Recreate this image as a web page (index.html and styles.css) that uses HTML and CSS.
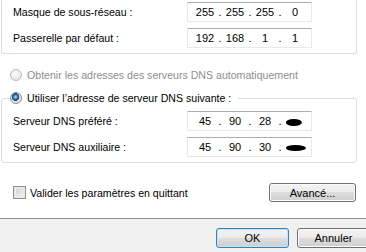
FILE: index.html
```html
<!DOCTYPE html>
<html lang="fr">
<head>
    <meta charset="UTF-8">
    <title>Propriétés de : Protocole Internet version 4</title>
    <link rel="stylesheet" href="styles.css">
</head>
<body>
    <div class="tab">
        <div class="group group-top">
            <div class="row">
                <span class="label">Masque de sous-réseau :</span>
                <div class="ip"><span>255</span><i>.</i><span>255</span><i>.</i><span>255</span><i>.</i><span>0</span></div>
            </div>
            <div class="row">
                <span class="label">Passerelle par défaut :</span>
                <div class="ip"><span>192</span><i>.</i><span>168</span><i>.</i><span>1</span><i>.</i><span>1</span></div>
            </div>
        </div>

        <div class="option disabled"><span class="radio"></span>Obtenir les adresses des serveurs DNS automatiquement</div>

        <fieldset class="group group-dns">
            <legend class="option"><span class="radio checked"></span>Utiliser l’adresse de serveur DNS suivante :</legend>
            <div class="row">
                <span class="label">Serveur DNS préféré :</span>
                <div class="ip"><span>45</span><i>.</i><span>90</span><i>.</i><span>28</span><i>.</i><span><b class="blot"></b></span></div>
            </div>
            <div class="row">
                <span class="label">Serveur DNS auxiliaire :</span>
                <div class="ip"><span>45</span><i>.</i><span>90</span><i>.</i><span>30</span><i>.</i><span><b class="blot blot-wide"></b></span></div>
            </div>
        </fieldset>

        <div class="validate-row">
            <label class="check"><span class="box"></span>Valider les paramètres en quittant</label>
            <button type="button" class="btn btn-advanced">Avancé...</button>
        </div>
    </div>
    <div class="footer">
        <button type="button" class="btn btn-default">OK</button>
        <button type="button" class="btn">Annuler</button>
    </div>
</body>
</html>
```

FILE: styles.css
```css
body {
    margin: 0;
    width: 366px;
    height: 252px;
    overflow: hidden;
    background-color: #fff;
    font-family: "Liberation Sans", Arial, sans-serif;
    font-size: 10.6px;
    color: #000;
}

.tab {
    box-sizing: border-box;
    height: 219px;
    border-bottom: 1px solid #898c95;
}

.group {
    margin: 0 0 0 1px;
    width: 356px;
    box-sizing: border-box;
    border: 1px solid #d5dfe5;
    border-radius: 3px;
}

.group-top {
    border-top: none;
    border-radius: 0 0 3px 3px;
    padding: 2px 0 5px;
}

.row {
    display: flex;
    align-items: center;
    height: 20px;
}

.row + .row {
    margin-top: 6px;
}

.label {
    width: 174px;
    padding-left: 11px;
}

.ip {
    display: flex;
    align-items: center;
    box-sizing: border-box;
    width: 125px;
    height: 20px;
    padding-left: 5px;
    border: 1px solid #e3e9ef;
    border-top-color: #abadb3;
    font-size: 11px;
}

.ip span {
    width: 24px;
    text-align: center;
}

.ip i {
    width: 6px;
    font-style: normal;
    text-align: center;
}

.blot {
    display: inline-block;
    width: 16px;
    height: 7px;
    margin-left: -3px;
    vertical-align: middle;
    border-radius: 45% 50% 50% 45%;
    background-color: #000;
}

.blot-wide {
    width: 20px;
    height: 6px;
    margin-left: 1px;
}

.option {
    display: flex;
    align-items: center;
    height: 14px;
    padding-left: 10px;
}

.option.disabled {
    margin-top: 14px;
    color: #8d8d8d;
}

.radio {
    box-sizing: border-box;
    width: 12px;
    height: 12px;
    margin-right: 5px;
    border: 1px solid #8e8f8f;
    border-radius: 50%;
    background: radial-gradient(circle at 40% 35%, #f4f4f4 0, #dcdcdc 70%);
}

.disabled .radio {
    border-color: #b9b9b9;
    background: radial-gradient(circle at 40% 35%, #fbfbfb 0, #e6e6e6 70%);
}

.radio.checked {
    background: radial-gradient(circle at 45% 40%, #b8dcf5 0, #2d76b8 28%, #0f3d6e 45%, #e9e9e9 50%, #d8d8d8 100%);
}

.group-dns {
    margin-top: 9px;
    padding: 6px 0 5px;
}

.group-dns legend {
    margin-left: 7px;
    padding: 0 7px 0 1px;
}

.validate-row {
    display: flex;
    align-items: center;
    justify-content: space-between;
    width: 356px;
    margin-top: 20px;
}

.check {
    display: flex;
    align-items: center;
    padding-left: 13px;
}

.box {
    box-sizing: border-box;
    width: 13px;
    height: 13px;
    margin-right: 4px;
    border: 1px solid #8e8f8f;
    background: linear-gradient(135deg, #cbcbcb, #f6f6f6);
    box-shadow: inset 0 0 0 2px #e9e9e9;
}

.btn {
    box-sizing: border-box;
    height: 20px;
    padding: 0;
    font-family: inherit;
    font-size: 11px;
    color: #000;
    border: 1px solid #707070;
    border-radius: 3px;
    background: linear-gradient(#f2f2f2 0, #ebebeb 50%, #dddddd 50%, #cfcfcf 100%);
    box-shadow: inset 0 0 0 1px #fcfcfc;
}

.btn-advanced {
    width: 87px;
    height: 19px;
}

.footer {
    display: flex;
    gap: 8px;
    height: 33px;
    padding: 9px 0 0 216px;
    box-sizing: border-box;
    background-color: #f0f0f0;
}

.footer .btn {
    flex: none;
    width: 73px;
}

.btn-default {
    border-color: #3c7fb1;
    box-shadow: inset 0 0 0 1px #bde4f8;
}
```
